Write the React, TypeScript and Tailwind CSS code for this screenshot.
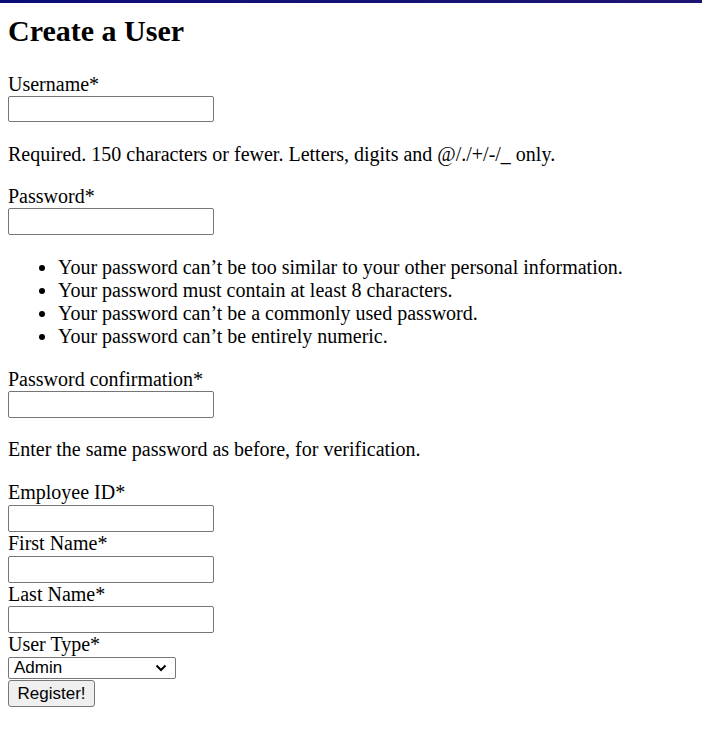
export default function App() {
  const serif = { fontFamily: '"Liberation Serif", "Times New Roman", serif' }

  const Field = ({ label, tight }: { label: string; tight?: boolean }) => (
    <div>
      <label className={tight ? 'block h-[23px] leading-[23px]' : 'block h-[24px] leading-[23px]'}>{label}</label>
      <input type="text" className="block w-[206px] h-[27px] border border-[#767676] rounded-[2px] bg-white" />
    </div>
  )

  return (
    <div className="min-h-[741px] bg-white text-black text-[20px] leading-[23px]" style={serif}>
      <div className="h-[3px] bg-gradient-to-r from-[#0c0c78] to-[#1c1470]"></div>
      <div className="px-2">
        <h2 className="mt-[11px] mb-[25px] text-[30px] leading-[34px] font-bold">Create a User</h2>

        <label className="block h-[23px]">Username*</label>
        <input type="text" className="block w-[206px] h-[26px] border border-[#767676] rounded-[2px]" />
        <p className="mt-[21px] mb-[19px]">Required. 150 characters or fewer. Letters, digits and @/./+/-/_ only.</p>

        <label className="block h-[23px]">Password*</label>
        <input type="password" className="block w-[206px] h-[27px] border border-[#767676] rounded-[2px]" />
        <ul className="list-disc pl-[50px] mt-[21px] mb-[20px]">
          <li>Your password can’t be too similar to your other personal information.</li>
          <li>Your password must contain at least 8 characters.</li>
          <li>Your password can’t be a commonly used password.</li>
          <li>Your password can’t be entirely numeric.</li>
        </ul>

        <label className="block h-[23px]">Password confirmation*</label>
        <input type="password" className="block w-[206px] h-[27px] border border-[#767676] rounded-[2px]" />
        <p className="mt-[20px] mb-[20px]">Enter the same password as before, for verification.</p>

        <Field label="Employee ID*" />
        <Field label="First Name*" />
        <Field label="Last Name*" tight />

        <label className="block h-[23px] leading-[23px]">User Type*</label>
        <div className="relative w-[168px] mt-[1px]">
          <select
            className="block w-[168px] h-[22px] appearance-none border border-[#767676] rounded-[2px] bg-white pl-[5px] text-[17px] leading-[20px]"
            style={{ fontFamily: '"Liberation Sans", Arial, sans-serif' }}
            defaultValue="admin"
          >
            <option value="admin">Admin</option>
            <option value="employee">Employee</option>
          </select>
          <svg className="absolute right-[9px] top-[7px] pointer-events-none" width="12" height="8" viewBox="0 0 12 8">
            <path d="M1.5 1.5 L6 6 L10.5 1.5" fill="none" stroke="#000" strokeWidth="2" />
          </svg>
        </div>
        <button
          type="submit"
          className="block mt-[1px] w-[87px] h-[27px] bg-[#efefef] border border-[#767676] rounded-[3px] text-[17px] leading-[20px]"
          style={{ fontFamily: '"Liberation Sans", Arial, sans-serif' }}
        >
          Register!
        </button>
      </div>
    </div>
  )
}
